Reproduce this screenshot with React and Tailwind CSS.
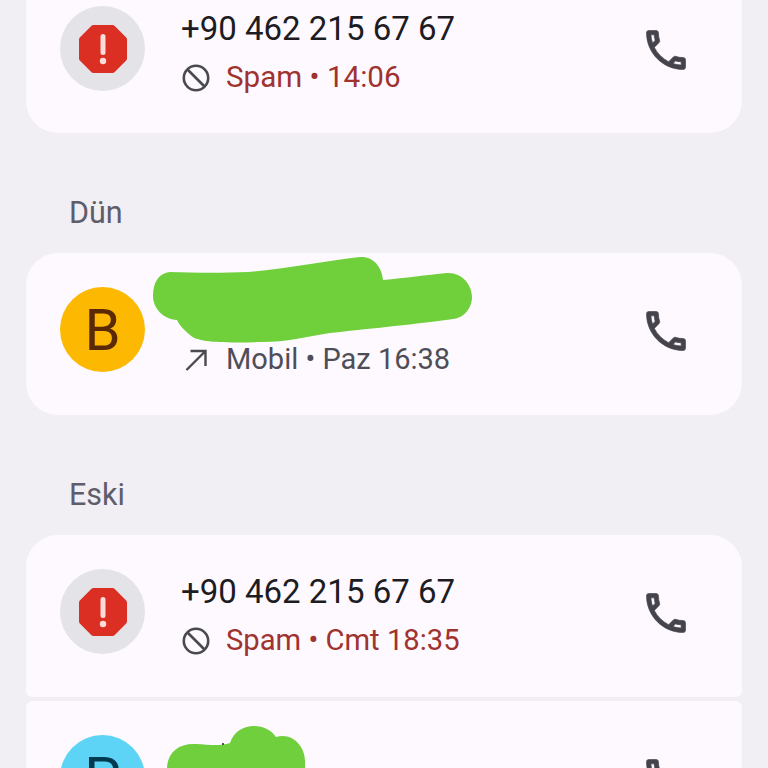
const CALL_PATH =
  "M6.54 5c.06.89.21 1.76.45 2.59l-1.2 1.2c-.41-1.2-.67-2.47-.76-3.79h1.51m9.86 12.02c.85.24 1.72.39 2.6.45v1.49c-1.32-.09-2.59-.35-3.8-.75l1.2-1.19M7.5 3H4c-.55 0-1 .45-1 1 0 9.39 7.61 17 17 17 .55 0 1-.45 1-1v-3.49c0-.55-.45-1-1-1-1.24 0-2.45-.2-3.57-.57-.1-.04-.21-.05-.31-.05-.26 0-.51.1-.71.29l-2.2 2.2c-2.83-1.45-5.15-3.76-6.59-6.59l2.2-2.2c.28-.28.36-.67.25-1.02C8.7 6.45 8.5 5.25 8.5 4c0-.55-.45-1-1-1z";

function CallIcon() {
  return (
    <svg viewBox="0 0 24 24" className="size-[52px] shrink-0 text-[#45444c] fill-current stroke-current stroke-[0.3]">
      <path d={CALL_PATH} />
    </svg>
  );
}

function BlockIcon() {
  return (
    <svg viewBox="0 0 28 28" className="size-7 shrink-0 text-[#4a4950] fill-none stroke-current stroke-[2.6]">
      <circle cx="14" cy="14" r="12.2" />
      <path d="M5.5 5.500l17 17" />
    </svg>
  );
}

function OutgoingIcon() {
  return (
    <svg viewBox="0 0 28 28" className="size-7 shrink-0 text-[#4a4950] fill-none stroke-current stroke-[2.4]">
      <path d="M4.500 24L23.500 5M8.500 5h15v15" />
    </svg>
  );
}

function SpamAvatar() {
  return (
    <div className="size-[85px] shrink-0 rounded-full bg-[#e3e3e8] flex items-center justify-center">
      <svg viewBox="0 0 50 50" className="size-[50px]">
        <path d="M15.500 1h19a3 3 0 0 1 2 .8L48.200 13.500a3 3 0 0 1 .8 2v19a3 3 0 0 1-.8 2L36.500 48.200a3 3 0 0 1-2 .8h-19a3 3 0 0 1-2-.8L1.800 36.500a3 3 0 0 1-.8-2v-19a3 3 0 0 1 .8-2L13.500 1.800a3 3 0 0 1 2-.8z" className="fill-[#dc2f24]" />
        <rect x="22.500" y="10" width="5" height="21" rx="2.5" className="fill-[#fbdcd8]" />
        <circle cx="25" cy="37" r="3.200" className="fill-[#fbdcd8]" />
      </svg>
    </div>
  );
}

function LetterAvatar({ letter, bg, fg }) {
  return (
    <div className={`size-[85px] shrink-0 rounded-full flex items-center justify-center text-[58px] leading-none ${bg} ${fg}`}>
      {letter}
    </div>
  );
}

function Row({ avatar, title, icon, sub, subClass, radius, pad = "pt-[34px]", textGap = "-mt-[2px]", scribble }) {
  return (
    <div className={`relative flex items-start h-[162px] bg-[#fdf9fe] pl-[34px] pr-[50px] ${pad} ${radius}`}>
      {avatar}
      <div className={`ml-[36px] flex-1 min-w-0 ${textGap}`}>
        <div className="h-[49px] flex items-center text-[33px] leading-none text-[#1d1c22]">{title}</div>
        <div className="h-[49px] flex items-center gap-[16px] pl-[1px]">
          {icon}
          <span className={`leading-none ${subClass}`}>{sub}</span>
        </div>
      </div>
      <div className="translate-y-[18px]">
        <CallIcon />
      </div>
      {scribble}
    </div>
  );
}

function SectionLabel({ children }) {
  return (
    <div className="h-[120px] flex items-end pl-[43px] pb-[22px] text-[30.5px] leading-[36px] text-[#5f5d6b]">
      {children}
    </div>
  );
}

export default function App() {
  return (
    <div className="w-[768px] h-[768px] overflow-hidden bg-[#f1eff4] px-[26px] font-['Roboto',sans-serif]">
      <div className="-mt-[29px]">
        <Row
          radius="rounded-[32px]"
          pad="pt-[35px]"
          avatar={<SpamAvatar />}
          title="+90 462 215 67 67"
          icon={<BlockIcon />}
          sub="Spam • 14:06"
          subClass="text-[29.6px] text-[#a0322f]"
        />
        <SectionLabel>Dün</SectionLabel>
        <Row
          radius="rounded-[32px]"
          textGap="-mt-[1px]"
          avatar={<LetterAvatar letter="B" bg="bg-[#fdb902]" fg="text-[#5a2a05]" />}
          title=""
          icon={<OutgoingIcon />}
          sub="Mobil • Paz 16:38"
          subClass="text-[29px] text-[#4f4e58]"
          scribble={
            <svg viewBox="0 0 716 162" className="absolute inset-0 w-[716px] h-[162px] pointer-events-none">
              <path
                d="M144 19C170 20 200 20 221 19C260 16 300 8 334 4C347 3 356 14 357 27C380 25 400 22 421 20C435 19 446 31 446 44C446 55 438 65 427 66C400 70 360 74 304 80C280 84 260 89 237 89C200 90 172 90 164 82C158 77 153 72 151 67C137 66 127 55 127 43C127 29 133 20 144 19z"
                className="fill-[#6fd03c]"
              />
            </svg>
          }
        />
        <SectionLabel>Eski</SectionLabel>
        <Row
          radius="rounded-t-[32px] rounded-b-[6px]"
          avatar={<SpamAvatar />}
          title="+90 462 215 67 67"
          icon={<BlockIcon />}
          sub="Spam • Cmt 18:35"
          subClass="text-[29.2px] text-[#a0322f]"
        />
        <div className="h-[4px]" />
        <Row
          radius="rounded-t-[6px] rounded-b-[32px]"
          avatar={<LetterAvatar letter="P" bg="bg-[#5dd4f5]" fg="text-[#003a50]" />}
          title=""
          icon={<BlockIcon />}
          sub=""
          subClass="text-[29px] text-[#4f4e58]"
          scribble={
            <svg viewBox="0 0 716 162" className="absolute inset-0 w-[716px] h-[162px] pointer-events-none">
              <path d="M141 68C141 52 152 42 170 43C185 44 195 45 204 42C208 30 218 25 228 25C238 25 245 29 250 36C266 31 279 45 279 60V100H141z" className="fill-[#6fcf3c]" />
              <circle cx="197" cy="43" r="1" className="fill-[#222222]" />
            </svg>
          }
        />
      </div>
    </div>
  );
}
